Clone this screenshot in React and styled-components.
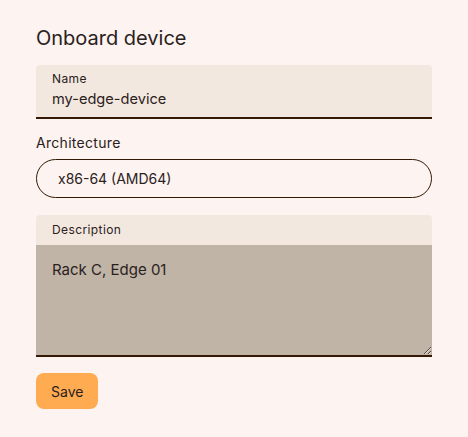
import React from "react";
import styled, { createGlobalStyle } from "styled-components";

const Global = createGlobalStyle`
  html, body { margin: 0; padding: 0; background: #fdf3f0; }
  body { font-family: Inter, "Noto Sans", sans-serif; color: #2a211c; }
  * { box-sizing: border-box; }
`;

const Page = styled.div`
  padding: 24px 36px 24px;
  width: 468px;
  display: flex;
  flex-direction: column;
`;

const Title = styled.h1`
  margin: 0 0 13px;
  font-size: 20px;
  line-height: 28px;
  font-weight: 400;
  color: #2a211c;
`;

const FilledField = styled.label`
  display: flex;
  flex-direction: column;
  background: #f3e8df;
  border-radius: 4px 4px 0 0;
  border-bottom: 2px solid #341a06;
  padding: 6px 16px 8px;
  height: 54px;
`;

const SmallLabel = styled.span`
  font-size: 12px;
  line-height: 16px;
  letter-spacing: 0.4px;
  color: #2a211c;
`;

const TextInput = styled.input`
  border: none;
  background: transparent;
  padding: 0;
  margin-top: 2px;
  font-family: inherit;
  font-size: 14.6px;
  line-height: 20px;
  color: #2a211c;
  outline: none;
`;

const FieldLabel = styled.div`
  margin-top: 14px;
  font-size: 14px;
  line-height: 20px;
  letter-spacing: 0.3px;
  color: #2a211c;
`;

const Select = styled.div`
  margin-top: 6px;
  height: 39px;
  border: 1px solid #341a06;
  border-radius: 20px;
  display: flex;
  align-items: center;
  padding: 0 21px;
  font-size: 14px;
  color: #2a211c;
`;

const AreaField = styled.label`
  margin-top: 17px;
  display: flex;
  flex-direction: column;
  background: #f3e8df;
  border-radius: 4px 4px 0 0;
`;

const AreaLabel = styled(SmallLabel)`
  padding: 7px 16px 7px;
`;

const TextArea = styled.textarea`
  display: block;
  border: none;
  border-bottom: 2px solid #341a06;
  background: #c0b4a7;
  height: 112px;
  padding: 14px 16px;
  margin: 0;
  font-family: inherit;
  font-size: 15px;
  line-height: 22px;
  color: #2a211c;
  outline: none;
  resize: vertical;
`;

const Button = styled.button`
  margin-top: 16px;
  align-self: flex-start;
  height: 36px;
  padding: 0 15px;
  border: none;
  border-radius: 8px;
  background: #ffab52;
  font-family: inherit;
  font-size: 14px;
  color: #2a211c;
`;

export default function App() {
  return (
    <>
      <Global />
      <Page>
        <Title>Onboard device</Title>
        <FilledField>
          <SmallLabel>Name</SmallLabel>
          <TextInput defaultValue="my-edge-device" />
        </FilledField>
        <FieldLabel>Architecture</FieldLabel>
        <Select>x86-64 (AMD64)</Select>
        <AreaField>
          <AreaLabel>Description</AreaLabel>
          <TextArea defaultValue="Rack C, Edge 01" />
        </AreaField>
        <Button>Save</Button>
      </Page>
    </>
  );
}
